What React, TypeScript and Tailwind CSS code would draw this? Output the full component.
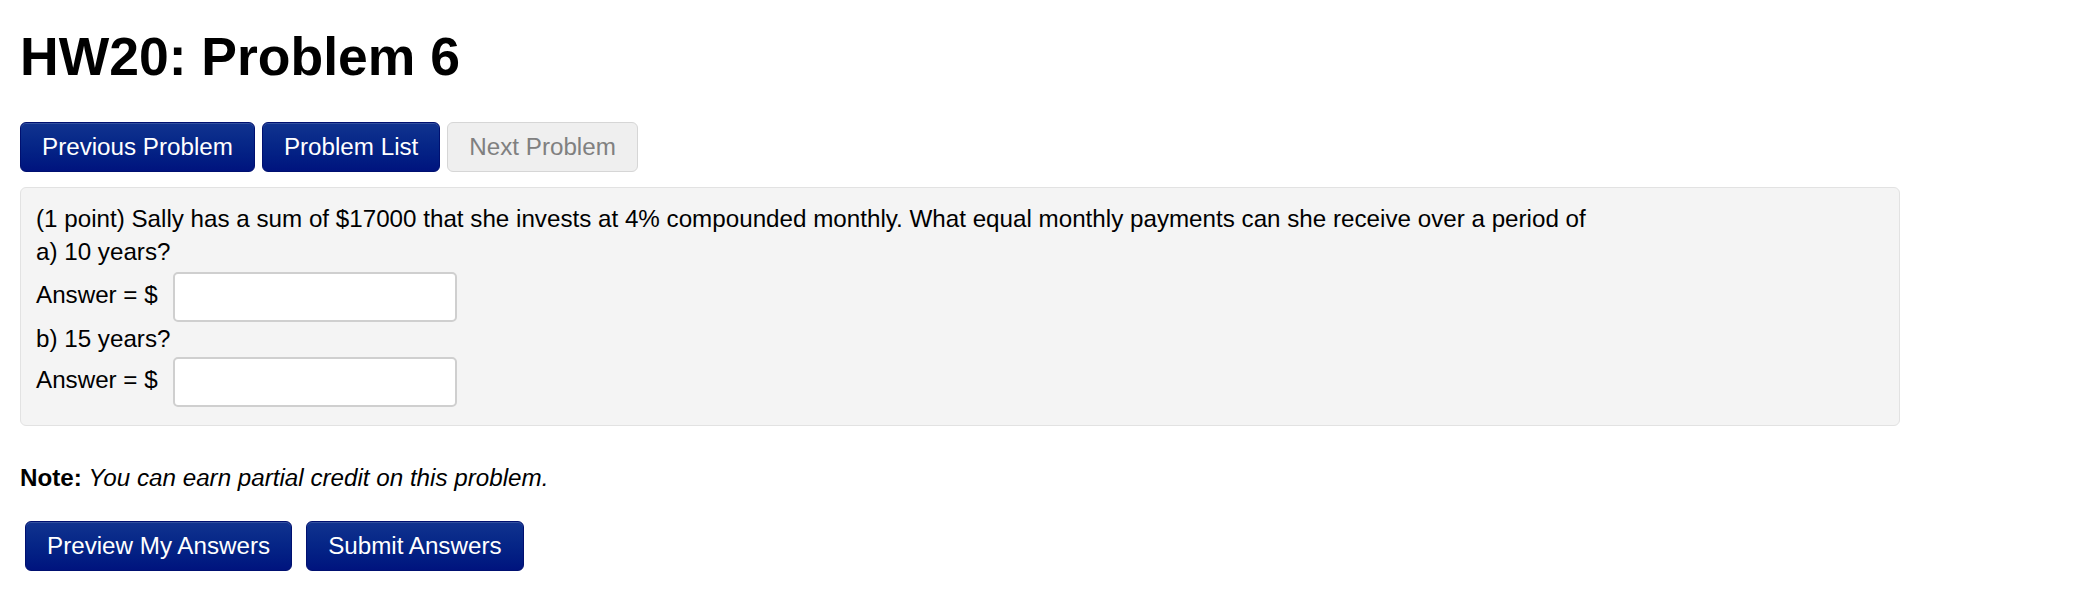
import React from "react";

const navBtn =
  "inline-flex items-center h-[50px] px-[21px] rounded-[6px] border border-[#001070] bg-gradient-to-b from-[#11338f] to-[#00137e] text-white text-[24.2px] leading-[24px] shadow-[inset_0_1px_0_rgba(255,255,255,0.15)]";

export default function App() {
  return (
    <div
      className="bg-white text-black min-h-[602px] pl-[20px] pt-[30px]"
      style={{ fontFamily: '"Liberation Sans", Arial, Helvetica, sans-serif' }}
    >
      <h1 className="text-[53.5px] leading-[54px] font-bold">HW20: Problem 6</h1>

      <div className="mt-[38px] flex gap-[7px]">
        <button className={navBtn}>Previous Problem</button>
        <button className={navBtn}>Problem List</button>
        <button className="inline-flex items-center h-[50px] px-[21px] rounded-[6px] border border-[#d6d6d6] bg-[#efefef] text-[#808080] text-[24.2px] leading-[24px]">
          Next Problem
        </button>
      </div>

      <div className="mt-[15px] w-[1880px] rounded-[6px] border border-[#e2e2e2] bg-[#f4f4f4] pl-[15px] pt-[14px] pb-[18px] text-[24.2px] leading-[33px]">
        <div>
          (1 point) Sally has a sum of $17000 that she invests at 4% compounded monthly. What equal monthly payments can she receive over a period of
        </div>
        <div>a) 10 years?</div>
        <div className="flex items-start mt-[4px]">
          <span className="mr-[15px] pt-[6px]">Answer = $</span>
          <input
            type="text"
            className="w-[284px] h-[50px] rounded-[5px] border-2 border-[#cfcfcf] bg-white outline-none"
          />
        </div>
        <div>b) 15 years?</div>
        <div className="flex items-start mt-[2px]">
          <span className="mr-[15px] pt-[6px]">Answer = $</span>
          <input
            type="text"
            className="w-[284px] h-[50px] rounded-[5px] border-2 border-[#cfcfcf] bg-white outline-none"
          />
        </div>
      </div>

      <div className="mt-[35px] text-[24.2px] leading-[33px]">
        <span className="font-bold">Note:</span>{" "}
        <span className="italic">You can earn partial credit on this problem.</span>
      </div>

      <div className="mt-[27px] ml-[5px] flex gap-[14px]">
        <button className={navBtn}>Preview My Answers</button>
        <button className={navBtn}>Submit Answers</button>
      </div>
    </div>
  );
}
